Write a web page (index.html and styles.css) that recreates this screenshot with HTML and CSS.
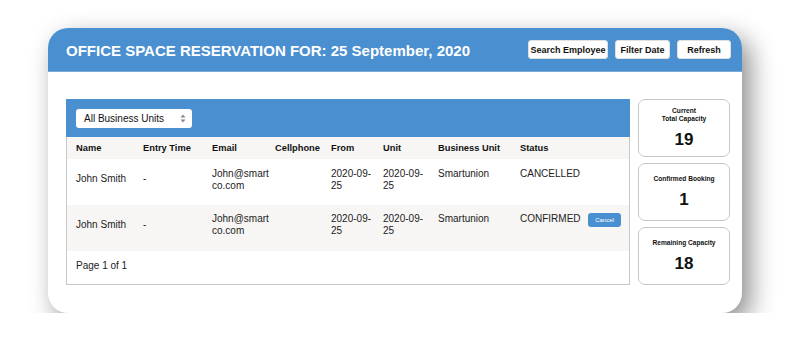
FILE: index.html
```html
<!DOCTYPE html>
<html>
<head>
<meta charset="utf-8">
<link rel="stylesheet" href="styles.css">
</head>
<body>
<div class="card">
  <div class="header">
    <h1 class="title">OFFICE SPACE RESERVATION FOR: 25 September, 2020</h1>
    <div class="actions">
      <button class="hbtn w-search">Search Employee</button>
      <button class="hbtn w-filter">Filter Date</button>
      <button class="hbtn w-refresh">Refresh</button>
    </div>
  </div>
  <div class="content">
    <div class="panel">
      <div class="panel-bar">
        <div class="select">
          <span>All Business Units</span>
          <svg class="arrows" width="6" height="9" viewBox="0 0 6 9"><path d="M3 0.5 L5.5 3.5 H0.5 Z M3 8.5 L5.5 5.5 H0.5 Z" fill="#888"/></svg>
        </div>
      </div>
      <table class="tbl">
        <colgroup>
          <col class="c-name"><col class="c-entry"><col class="c-email"><col class="c-cell"><col class="c-from"><col class="c-unit"><col class="c-bu"><col class="c-status"><col class="c-act">
        </colgroup>
        <thead>
          <tr><th>Name</th><th>Entry Time</th><th>Email</th><th>Cellphone</th><th>From</th><th>Unit</th><th>Business Unit</th><th>Status</th><th></th></tr>
        </thead>
        <tbody>
          <tr>
            <td class="mid">John Smith</td><td class="mid">-</td><td>John@smart<br>co.com</td><td></td><td>2020-09-<br>25</td><td>2020-09-<br>25</td><td>Smartunion</td><td>CANCELLED</td><td></td>
          </tr>
          <tr class="alt">
            <td class="mid">John Smith</td><td class="mid">-</td><td>John@smart<br>co.com</td><td></td><td>2020-09-<br>25</td><td>2020-09-<br>25</td><td>Smartunion</td><td>CONFIRMED</td><td><button class="cancel">Cancel</button></td>
          </tr>
        </tbody>
      </table>
      <div class="pager">Page 1 of 1</div>
    </div>
    <div class="stats">
      <div class="stat">
        <div class="stat-label">Current<br>Total Capacity</div>
        <div class="stat-num">19</div>
      </div>
      <div class="stat">
        <div class="stat-label">Confirmed Booking</div>
        <div class="stat-num">1</div>
      </div>
      <div class="stat">
        <div class="stat-label">Remaining Capacity</div>
        <div class="stat-num">18</div>
      </div>
    </div>
  </div>
</div>
</body>
</html>
```
FILE: styles.css
```css
* { box-sizing: border-box; }
html, body { margin: 0; padding: 0; background: #fff; }
body {
  font-family: "Liberation Sans", Arial, Helvetica, sans-serif;
  color: #111;
  padding: 28px 0 0 48px;
}
.card {
  width: 694px;
  height: 285px;
  background: #fff;
  border-radius: 20px;
  overflow: hidden;
  box-shadow: 8px 10px 26px rgba(0,0,0,0.45);
  display: flex;
  flex-direction: column;
}
.header {
  height: 44px;
  background: #4a90d0;
  display: flex;
  align-items: center;
  justify-content: space-between;
  padding: 0 11px 0 18px;
  border-bottom: 1px solid #7aa9d6;
}
.title {
  margin: 0 0 0 0;
  color: #fff;
  font-size: 15px;
  font-weight: bold;
  position: relative;
  top: 1px;
}
.actions { display: flex; gap: 7px; }
.hbtn {
  height: 19px;
  background: #fff;
  border: 1px solid #e0e0e0;
  border-radius: 3px;
  font-family: inherit;
  font-size: 9px;
  font-weight: bold;
  color: #111;
  padding: 0;
}
.w-search { width: 80px; }
.w-filter { width: 55px; }
.w-refresh { width: 54px; }
.content {
  flex: 1;
  display: flex;
  gap: 8px;
  padding: 27px 12px 28px 18px;
}
.panel {
  width: 564px;
  border: 1px solid #c8c8c8;
  border-top: none;
  display: flex;
  flex-direction: column;
}
.panel-bar {
  height: 38px;
  background: #4a90d0;
  margin: 0 -1px;
  padding: 10px 0 0 10px;
}
.select {
  width: 116px;
  height: 19px;
  background: #fff;
  border-radius: 3px;
  display: flex;
  align-items: center;
  justify-content: space-between;
  padding: 0 6px 0 8px;
  font-size: 10px;
  color: #111;
}
.tbl {
  width: 100%;
  border-collapse: collapse;
  table-layout: fixed;
  font-size: 10px;
}
.c-name { width: 67px; }
.c-entry { width: 69px; }
.c-email { width: 63px; }
.c-cell { width: 56px; }
.c-from { width: 52px; }
.c-unit { width: 55px; }
.c-bu { width: 82px; }
.c-status { width: 68px; }
.c-act { width: auto; }
.tbl th {
  background: #f7f6f4;
  height: 22px;
  text-align: left;
  font-weight: bold;
  padding: 0 0 0 9px;
  font-size: 9.3px;
}
.tbl td {
  height: 46px;
  vertical-align: top;
  padding: 9px 0 0 9px;
  line-height: 12px;
  color: #222;
}
.tbl td.mid { padding-top: 14px; }
.tbl tr.alt td { background: #f7f6f4; padding-top: 8px; }
.tbl tr.alt td.mid { padding-top: 14px; }
.cancel {
  width: 33px;
  height: 14px;
  padding: 0;
  margin-top: -1px;
  border: none;
  border-radius: 3px;
  background: #4a90d0;
  color: #fff;
  font-family: inherit;
  font-size: 6px;
}
.pager {
  padding: 9px 0 0 9px;
  font-size: 10px;
  color: #222;
}
.stats {
  width: 92px;
  display: flex;
  flex-direction: column;
  gap: 6px;
}
.stat {
  flex: 1;
  border: 1px solid #c8c8c8;
  border-radius: 7px;
  display: flex;
  flex-direction: column;
  align-items: center;
  justify-content: center;
  gap: 7px;
  text-align: center;
}
.stat-label {
  font-size: 6.6px;
  font-weight: bold;
  line-height: 8px;
}
.stat-num {
  font-size: 17px;
  font-weight: bold;
  line-height: 20px;
}
```
